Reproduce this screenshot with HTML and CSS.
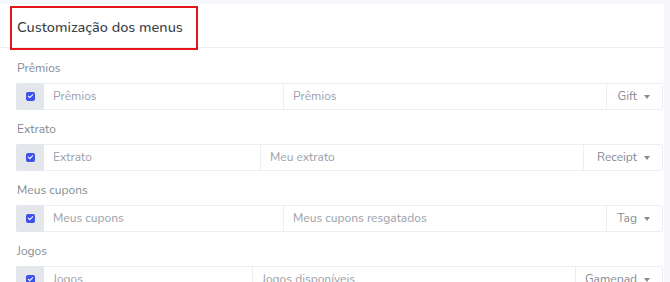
FILE: index.html
```html
<!DOCTYPE html>
<html lang="pt-BR">
<head>
    <meta charset="UTF-8">
    <meta name="viewport" content="width=device-width, initial-scale=1.0">
    <title>Customização dos menus</title>
    <link rel="stylesheet" href="styles.css">
</head>
<body>
    <div class="card">
        <div class="card-header">
            <h3 class="card-title">Customização dos menus</h3>
            <div class="highlight"></div>
        </div>
        <div class="card-body">
            <!-- Prêmios -->
            <div class="field">
                <label class="field-label">Prêmios</label>
                <div class="input-group">
                    <div class="addon"><span class="check"></span></div>
                    <div class="input input-name">Prêmios</div>
                    <div class="input input-title">Prêmios</div>
                    <div class="select select-sm">Gift <span class="caret"></span></div>
                </div>
            </div>

            <!-- Extrato -->
            <div class="field">
                <label class="field-label">Extrato</label>
                <div class="input-group">
                    <div class="addon"><span class="check"></span></div>
                    <div class="input input-name">Extrato</div>
                    <div class="input input-title">Meu extrato</div>
                    <div class="select select-md">Receipt <span class="caret"></span></div>
                </div>
            </div>

            <!-- Meus cupons -->
            <div class="field">
                <label class="field-label">Meus cupons</label>
                <div class="input-group">
                    <div class="addon"><span class="check"></span></div>
                    <div class="input input-name">Meus cupons</div>
                    <div class="input input-title">Meus cupons resgatados</div>
                    <div class="select select-sm">Tag <span class="caret"></span></div>
                </div>
            </div>

            <!-- Jogos -->
            <div class="field">
                <label class="field-label">Jogos</label>
                <div class="input-group">
                    <div class="addon"><span class="check"></span></div>
                    <div class="input input-name">Jogos</div>
                    <div class="input input-title">Jogos disponíveis</div>
                    <div class="select select-lg">Gamepad <span class="caret"></span></div>
                </div>
            </div>
        </div>
    </div>
</body>
</html>
```

FILE: styles.css
```css
:root {
    --page-bg: #f5f7fb;
    --card-bg: #ffffff;
    --border-color: #eceef2;
    --title-color: #3c4147;
    --label-color: #858b94;
    --text-muted: #9aa0a9;
    --addon-bg: #e3e6eb;
    --check-color: #3d52e8;
    --highlight: #e4141b;
}

* {
    margin: 0;
    padding: 0;
    box-sizing: border-box;
}

body {
    background-color: var(--page-bg);
    font-family: 'Nunito', 'Lato', 'Open Sans', sans-serif;
    width: 670px;
    height: 282px;
    overflow: hidden;
}

.card {
    background: var(--card-bg);
    width: 664px;
    margin-top: 4px;
    height: 278px;
}

.card-header {
    position: relative;
    height: 44px;
    border-bottom: 1px solid var(--border-color);
    display: flex;
    align-items: center;
    padding-left: 17px;
}

.card-title {
    font-size: 14.5px;
    font-weight: 500;
    color: var(--title-color);
    margin-top: 2px;
}

.highlight {
    position: absolute;
    left: 10px;
    top: 2px;
    width: 188px;
    height: 44px;
    border: 2px solid var(--highlight);
}

.card-body {
    padding: 10px 1px 0 16px;
}

.field {
    margin-bottom: 9px;
}

.field-label {
    display: block;
    font-size: 12px;
    line-height: 20px;
    color: var(--label-color);
    margin-left: 1px;
    margin-bottom: 5px;
}

.input-group {
    display: flex;
    height: 27px;
}

.addon {
    width: 28px;
    background: var(--addon-bg);
    display: flex;
    align-items: center;
    justify-content: center;
    border-radius: 2px 0 0 2px;
}

.check {
    width: 9px;
    height: 9px;
    border-radius: 2px;
    background: var(--check-color);
    position: relative;
}

.check::after {
    content: '';
    position: absolute;
    left: 3px;
    top: 1px;
    width: 2px;
    height: 4px;
    border: solid #fff;
    border-width: 0 1.5px 1.5px 0;
    transform: rotate(45deg);
}

.input {
    border: 1px solid var(--border-color);
    border-left: none;
    font-size: 12px;
    line-height: 25px;
    color: var(--text-muted);
    padding-left: 9px;
    white-space: nowrap;
    overflow: hidden;
}

.input-name {
    flex: 1;
}

.input-title {
    width: 323px;
}

.select {
    border: 1px solid var(--border-color);
    border-left: none;
    font-size: 12px;
    line-height: 25px;
    color: var(--label-color);
    padding-right: 12px;
    display: flex;
    align-items: center;
    justify-content: flex-end;
    gap: 7px;
    border-radius: 0 2px 2px 0;
}

.select-sm {
    width: 56px;
}

.select-md {
    width: 79px;
}

.select-lg {
    width: 87px;
}

.caret {
    width: 0;
    height: 0;
    border-left: 3.5px solid transparent;
    border-right: 3.5px solid transparent;
    border-top: 4px solid var(--label-color);
}
```
